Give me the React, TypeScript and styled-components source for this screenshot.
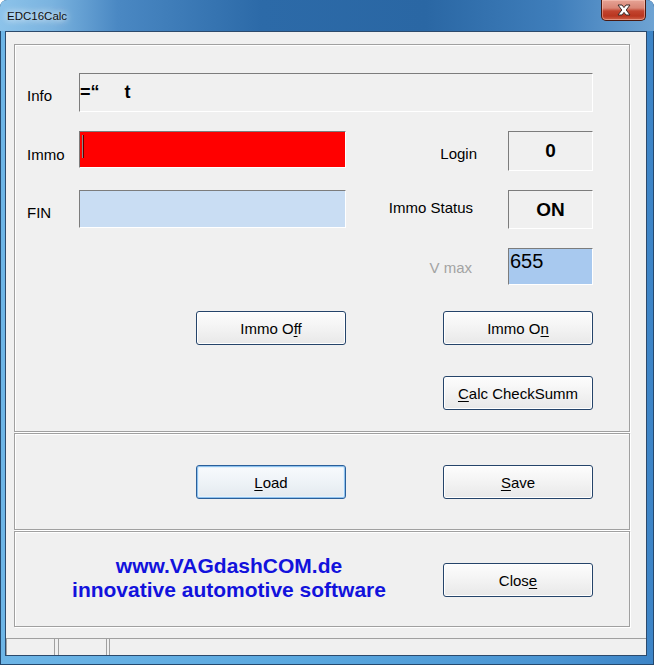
import styled, { createGlobalStyle } from 'styled-components';

const GlobalStyle = createGlobalStyle`
  html, body {
    margin: 0;
    padding: 0;
    background: #ffffff;
  }
  body {
    font-family: "Liberation Sans", Arial, sans-serif;
  }
`;

const Window = styled.div`
  width: 654px;
  height: 665px;
  box-sizing: border-box;
  display: flex;
  flex-direction: column;
  border-radius: 7px 7px 0 0;
  overflow: hidden;
  background: linear-gradient(90deg, #6db5e6 0%, #5aa8df 45%, #4a94d2 85%, #3d84c6 100%);
  box-shadow: inset 0 0 0 1px #24496f;
`;

const TitleBar = styled.div`
  height: 31px;
  flex-shrink: 0;
  display: flex;
  align-items: flex-start;
  background: linear-gradient(90deg, #8cc3ea 0%, #7ab3df 8%, #4a88c3 18%, #2c6aa8 40%, #2a67a4 65%, #3f7ebb 85%, #6ea3d3 100%);
`;

const Title = styled.span`
  padding: 10px 0 0 7px;
  font-size: 11.5px;
  color: #101010;
  text-shadow: 0 0 6px rgba(255, 255, 255, 0.95), 0 0 10px rgba(255, 255, 255, 0.8);
`;

const CloseBox = styled.div`
  margin-left: auto;
  margin-right: 8px;
  width: 45px;
  height: 21px;
  box-sizing: border-box;
  display: flex;
  align-items: center;
  justify-content: center;
  border: 1px solid #4a1910;
  border-top: none;
  border-radius: 0 0 5px 5px;
  background: linear-gradient(180deg, #e6a395 0%, #d98676 40%, #c2442f 55%, #b93620 80%, #d0634a 100%);
  box-shadow: inset 0 0 0 1px rgba(255, 210, 200, 0.45);
`;

const Body = styled.div`
  flex: 1;
  display: flex;
  padding: 0 7px 9px 5px;
`;

const Client = styled.div`
  flex: 1;
  display: flex;
  flex-direction: column;
  background: #f0f0f0;
  border: 1px solid #2c4a6c;
`;

const Content = styled.div`
  padding: 12px 16px 11px 8px;
`;

const Panel = styled.section<{ $h: number; $pt: number }>`
  height: ${p => p.$h}px;
  box-sizing: border-box;
  padding-top: ${p => p.$pt}px;
  border: 1px solid #a0a0a0;
  box-shadow: inset 1px 1px 0 #ffffff, 1px 1px 0 #ffffff;

  & + & {
    margin-top: 1px;
  }
`;

const Row = styled.div<{ $h: number; $mt?: number }>`
  display: grid;
  grid-template-columns: 64px 117px 150px 97px 65px 85px;
  grid-template-rows: ${p => p.$h}px;
  height: ${p => p.$h}px;
  margin-top: ${p => p.$mt ?? 0}px;
  align-items: center;
`;

const Label = styled.span<{ $col?: string; $dy?: number; $mr?: number; $muted?: boolean }>`
  grid-column: ${p => p.$col ?? '1'};
  justify-self: ${p => (p.$mr !== undefined ? 'end' : 'start')};
  padding-left: ${p => (p.$mr !== undefined ? 0 : 12)}px;
  margin-right: ${p => p.$mr ?? 0}px;
  transform: translateY(${p => p.$dy ?? 0}px);
  font-size: 15px;
  color: ${p => (p.$muted ? '#a3a3a3' : '#000000')};
  white-space: nowrap;
`;

type FieldTone = 'plain' | 'red' | 'blue' | 'value';

const fieldBg: Record<FieldTone, string> = {
  plain: '#f0f0f0',
  red: '#ff0000',
  blue: '#c9ddf3',
  value: '#a8c9ef',
};

const Field = styled.div<{ $col: string; $h: number; $tone: FieldTone; $center?: boolean }>`
  grid-column: ${p => p.$col};
  align-self: start;
  height: ${p => p.$h}px;
  box-sizing: border-box;
  display: flex;
  align-items: ${p => (p.$tone === 'value' ? 'flex-start' : 'center')};
  justify-content: ${p => (p.$center ? 'center' : 'flex-start')};
  padding: ${p => (p.$tone === 'value' ? '1px 1px' : '0')};
  background: ${p => fieldBg[p.$tone]};
  border: 1px solid;
  border-color: #7c7c7c #ffffff #ffffff #7c7c7c;
  white-space: pre;
  color: #000000;
`;

const BigText = styled.span<{ $bold?: boolean; $size: number }>`
  font-size: ${p => p.$size}px;
  font-weight: ${p => (p.$bold ? 700 : 400)};
`;

const Caret = styled.span`
  width: 1px;
  height: 23px;
  margin-left: 2px;
  margin-bottom: 6px;
  background: #8a8a8a;
  box-shadow: 1px 0 0 #5a0000;
`;

const Button = styled.button<{ $col: string; $primary?: boolean }>`
  grid-column: ${p => p.$col};
  width: 150px;
  height: 34px;
  padding: 0;
  font-family: "Liberation Sans", Arial, sans-serif;
  font-size: 15px;
  color: #000000;
  border: 1px solid ${p => (p.$primary ? '#2a5f9a' : '#25446a')};
  border-radius: 3px;
  background: ${p =>
    p.$primary
      ? 'linear-gradient(180deg, #f8fbfd 0%, #eef3f7 50%, #e3e9ee 100%)'
      : 'linear-gradient(180deg, #fdfdfd 0%, #f3f3f3 50%, #e8e8e8 100%)'};
  box-shadow: ${p => (p.$primary ? 'inset 0 0 0 1px #8fc2ee, inset 0 0 0 2px #e4f1fb' : 'inset 0 0 0 1px #ffffff')};
  cursor: default;

  u {
    text-underline-offset: 2px;
  }
`;

const Brand = styled.div`
  grid-column: 1 / 5;
  height: 34px;
  display: flex;
  flex-direction: column;
  justify-content: center;
  align-items: center;
  font-size: 21px;
  font-weight: 700;
  line-height: 24px;
  color: #1212dc;
  white-space: nowrap;
  transform: translateY(-2px);
`;

const StatusBar = styled.div`
  height: 17px;
  display: flex;
  box-sizing: border-box;
  border-top: 1px solid #a0a0a0;
`;

const StatusCell = styled.div<{ $w?: number; $ml?: number }>`
  ${p => (p.$w ? `width: ${p.$w}px;` : 'flex: 1;')}
  margin-left: ${p => p.$ml ?? 0}px;
  border-left: 1px solid #a0a0a0;
  border-right: 1px solid ${p => (p.$w ? '#a0a0a0' : 'transparent')};
  box-sizing: border-box;
`;

export default function App() {
  return (
    <>
      <GlobalStyle />
      <Window>
        <TitleBar>
          <Title>EDC16Calc</Title>
          <CloseBox>
            <svg width="14" height="12" viewBox="0 0 14 12">
              <path
                d="M1 1 H5 L7 3.6 L9 1 H13 L9.2 6 L13 11 H9 L7 8.4 L5 11 H1 L4.8 6 Z"
                fill="#ffffff"
                stroke="#3b2a28"
                strokeWidth="1"
                strokeLinejoin="round"
              />
            </svg>
          </CloseBox>
        </TitleBar>

        <Body>
          <Client>
            <Content>
              <Panel $h={388} $pt={28}>
                <Row $h={39}>
                  <Label $dy={3}>Info</Label>
                  <Field $col="2 / 7" $h={39} $tone="plain">
                    <BigText $bold $size={18}>{'=“     t'}</BigText>
                  </Field>
                </Row>

                <Row $h={40} $mt={19}>
                  <Label $dy={3}>Immo</Label>
                  <Field $col="2 / 4" $h={37} $tone="red">
                    <Caret />
                  </Field>
                  <Label $col="4 / 6" $mr={31} $dy={2}>Login</Label>
                  <Field $col="6" $h={40} $tone="plain" $center>
                    <BigText $bold $size={19}>0</BigText>
                  </Field>
                </Row>

                <Row $h={39} $mt={19}>
                  <Label $dy={3}>FIN</Label>
                  <Field $col="2 / 4" $h={38} $tone="blue" />
                  <Label $col="4 / 6" $mr={35} $dy={-2}>Immo Status</Label>
                  <Field $col="6" $h={39} $tone="plain" $center>
                    <BigText $bold $size={19}>ON</BigText>
                  </Field>
                </Row>

                <Row $h={37} $mt={19}>
                  <Label $col="4 / 6" $mr={36} $dy={1} $muted>V max</Label>
                  <Field $col="6" $h={37} $tone="value">
                    <BigText $size={20}>655</BigText>
                  </Field>
                </Row>

                <Row $h={34} $mt={26}>
                  <Button $col="3">Immo O<u>f</u>f</Button>
                  <Button $col="5 / 7">Immo O<u>n</u></Button>
                </Row>

                <Row $h={34} $mt={31}>
                  <Button $col="5 / 7"><u>C</u>alc CheckSumm</Button>
                </Row>
              </Panel>

              <Panel $h={97} $pt={31}>
                <Row $h={34}>
                  <Button $col="3" $primary><u>L</u>oad</Button>
                  <Button $col="5 / 7"><u>S</u>ave</Button>
                </Row>
              </Panel>

              <Panel $h={96} $pt={31}>
                <Row $h={34}>
                  <Brand>
                    <span>www.VAGdashCOM.de</span>
                    <span>innovative automotive software</span>
                  </Brand>
                  <Button $col="5 / 7">Clos<u>e</u></Button>
                </Row>
              </Panel>
            </Content>

            <StatusBar>
              <StatusCell $w={49} />
              <StatusCell $w={49} $ml={3} />
              <StatusCell $ml={2} />
            </StatusBar>
          </Client>
        </Body>
      </Window>
    </>
  );
}
